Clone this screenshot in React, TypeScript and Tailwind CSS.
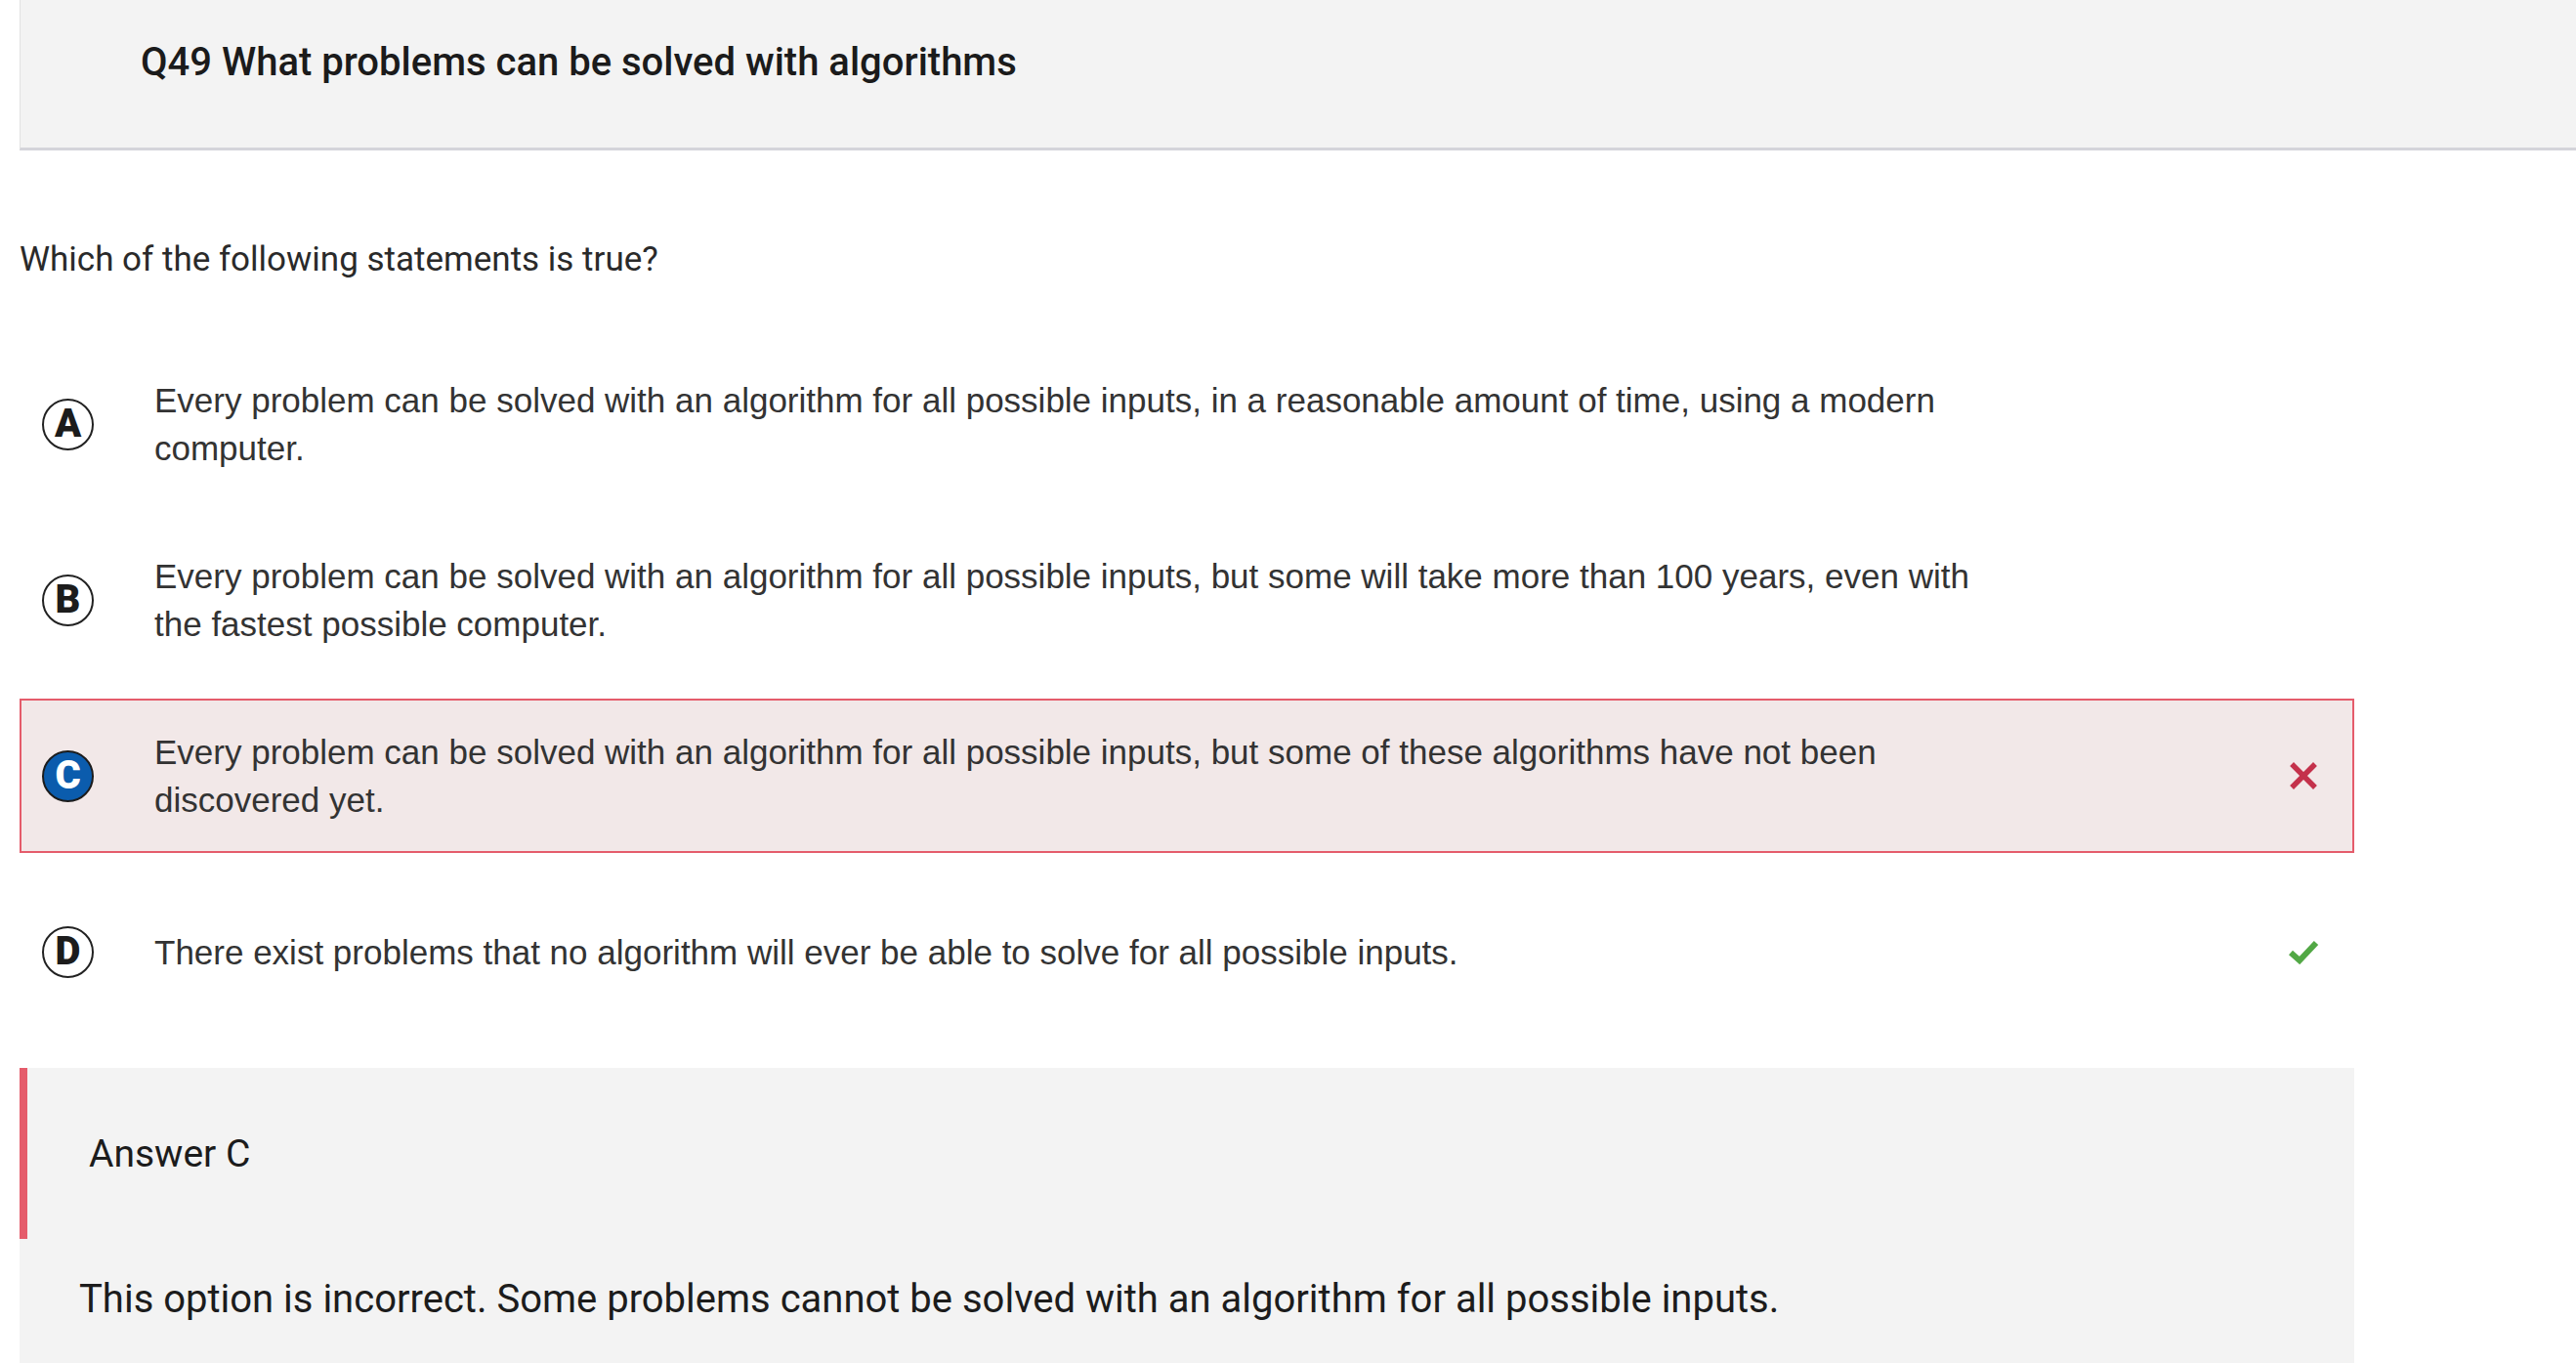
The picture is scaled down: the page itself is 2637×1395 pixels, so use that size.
import { ReactNode } from "react";

type Option = {
  key: string;
  text: string;
  selected?: boolean;
  mark?: "wrong" | "right";
};

const options: Option[] = [
  {
    key: "A",
    text: "Every problem can be solved with an algorithm for all possible inputs, in a reasonable amount of time, using a modern computer.",
  },
  {
    key: "B",
    text: "Every problem can be solved with an algorithm for all possible inputs, but some will take more than 100 years, even with the fastest possible computer.",
  },
  {
    key: "C",
    text: "Every problem can be solved with an algorithm for all possible inputs, but some of these algorithms have not been discovered yet.",
    selected: true,
    mark: "wrong",
  },
  {
    key: "D",
    text: "There exist problems that no algorithm will ever be able to solve for all possible inputs.",
    mark: "right",
  },
];

function Cross() {
  return (
    <svg width="28" height="28" viewBox="0 0 28 28" aria-hidden>
      <path d="M4 4 L24 24 M24 4 L4 24" stroke="#c4314b" strokeWidth="5.5" strokeLinecap="square" />
    </svg>
  );
}

function Check() {
  return (
    <svg width="32" height="26" viewBox="0 0 32 26" aria-hidden>
      <path d="M3 14 L12 22 L29 4" stroke="#52a845" strokeWidth="6" fill="none" strokeLinejoin="miter" />
    </svg>
  );
}

function Badge({ letter, active }: { letter: string; active?: boolean }) {
  return (
    <div
      className={
        active
          ? "flex h-[53px] w-[53px] shrink-0 items-center justify-center rounded-full border-2 border-[#1c1c1c] bg-[#0b5cad] text-white"
          : "flex h-[53px] w-[53px] shrink-0 items-center justify-center rounded-full border-2 border-[#222] bg-transparent text-[#1c1c1c]"
      }
    >
      <span className="font-['Roboto',sans-serif] text-[40px] font-black leading-none">{letter}</span>
    </div>
  );
}

function Row({ opt }: { opt: Option }) {
  let icon: ReactNode = null;
  if (opt.mark === "wrong") icon = <Cross />;
  if (opt.mark === "right") icon = <Check />;

  return (
    <div
      className={
        opt.selected
          ? "mb-[22px] flex h-[158px] items-center border-2 border-[#e55c6b] bg-[#f2e8e8] pl-[21px] pr-[34px]"
          : "mb-[22px] flex h-[158px] items-center border-2 border-transparent pl-[21px] pr-[34px]"
      }
    >
      <Badge letter={opt.key} active={opt.selected} />
      <p className="ml-[62px] w-[1885px] font-['Liberation_Sans',Arial,sans-serif] text-[35px] leading-[49px] text-[#333]">
        {opt.text}
      </p>
      <div className="ml-auto flex w-[32px] justify-center">{icon}</div>
    </div>
  );
}

export default function App() {
  return (
    <div className="min-h-screen w-[2637px] bg-white font-['Roboto',sans-serif]">
      <div className="ml-[20px] h-[154px] border-b-[3px] border-l border-[#d4d4da] border-l-[#e2e2e2] bg-[#f3f3f3] pl-[123px] pt-[40px]">
        <h1 className="text-[40px] font-medium leading-[48px] text-[#1b1b1b]">
          Q49 What problems can be solved with algorithms
        </h1>
      </div>

      <div className="pl-[20px]">
        <p className="mt-[92px] text-[35px] leading-[40px] text-[#2a2a2a]">
          Which of the following statements is true?
        </p>

        <div className="mt-[69px] w-[2390px]">
          {options.map((opt) => (
            <Row key={opt.key} opt={opt} />
          ))}
        </div>

        <div className="mt-[40px] w-[2390px] bg-[#f3f3f3] pb-[80px]">
          <div className="flex h-[175px] items-center border-l-[8px] border-[#e55c6b] pl-[63px]">
            <span className="text-[39px] leading-[46px] text-[#1c1c1c]">Answer C</span>
          </div>
          <p className="pl-[61px] pt-[32px] text-[40px] leading-[60px] text-[#1c1c1c]">
            This option is incorrect. Some problems cannot be solved with an algorithm for all possible inputs.
          </p>
        </div>
      </div>
    </div>
  );
}
